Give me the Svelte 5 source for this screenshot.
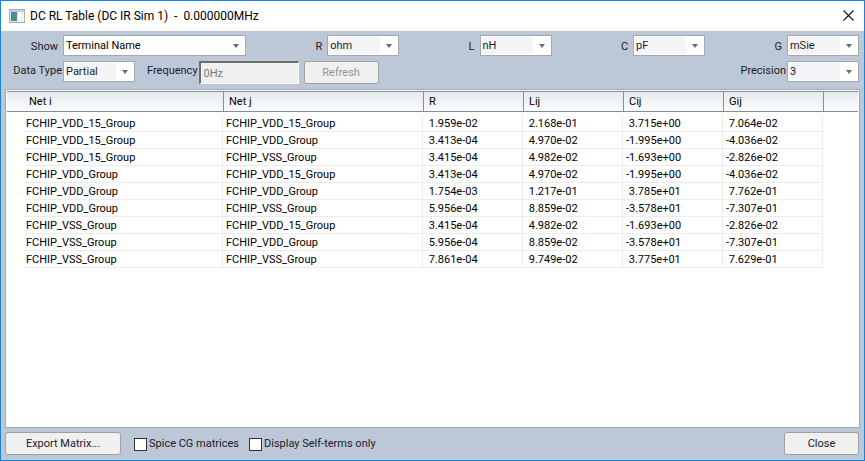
<script>
  let show = 'Terminal Name';
  let dataType = 'Partial';
  let frequency = '0Hz';
  let precision = '3';
  let spiceCG = false;
  let selfTerms = false;

  let units = [
    { name: 'R', value: 'ohm', options: ['ohm', 'mohm'] },
    { name: 'L', value: 'nH', options: ['nH', 'uH'] },
    { name: 'C', value: 'pF', options: ['pF', 'nF'] },
    { name: 'G', value: 'mSie', options: ['mSie', 'Sie'] }
  ];

  const VDD15 = 'FCHIP_VDD_15_Group';
  const VDD = 'FCHIP_VDD_Group';
  const VSS = 'FCHIP_VSS_Group';

  const rows = [
    [VDD15, VDD15, '1.959e-02', '2.168e-01', '3.715e+00', '7.064e-02'],
    [VDD15, VDD, '3.413e-04', '4.970e-02', '-1.995e+00', '-4.036e-02'],
    [VDD15, VSS, '3.415e-04', '4.982e-02', '-1.693e+00', '-2.826e-02'],
    [VDD, VDD15, '3.413e-04', '4.970e-02', '-1.995e+00', '-4.036e-02'],
    [VDD, VDD, '1.754e-03', '1.217e-01', '3.785e+01', '7.762e-01'],
    [VDD, VSS, '5.956e-04', '8.859e-02', '-3.578e+01', '-7.307e-01'],
    [VSS, VDD15, '3.415e-04', '4.982e-02', '-1.693e+00', '-2.826e-02'],
    [VSS, VDD, '5.956e-04', '8.859e-02', '-3.578e+01', '-7.307e-01'],
    [VSS, VSS, '7.861e-04', '9.749e-02', '3.775e+01', '7.629e-01']
  ];

  // positive numbers keep a blank where the minus sign would be
  function pad(value) {
    return value.startsWith('-') ? value : '\u00a0' + value;
  }
</script>

<div class="window">
  <header class="titlebar">
    <svg class="app-icon" width="16" height="14" viewBox="0 0 16 14" aria-hidden="true">
      <defs>
        <linearGradient id="pane" x1="0" y1="0" x2="1" y2="1">
          <stop offset="0" stop-color="#4a7fb0" />
          <stop offset="1" stop-color="#3f9a6c" />
        </linearGradient>
      </defs>
      <rect x="0.5" y="0.5" width="15" height="13" fill="#e4e6e8" stroke="#a9adb2" />
      <rect x="1" y="1" width="14" height="2" fill="#c9ced4" />
      <rect x="2" y="3" width="6" height="9" fill="url(#pane)" />
      <rect x="9" y="3" width="3" height="9" fill="#fff" />
      <rect x="13" y="4" width="2" height="8" fill="#f7f7f7" />
    </svg>
    <h1>DC RL Table (DC IR Sim 1) &nbsp;- &nbsp;0.000000MHz</h1>
    <button class="close-x" aria-label="Close window">
      <svg width="11" height="11" viewBox="0 0 11 11">
        <path d="M0.5 0.5L10.5 10.5M10.5 0.5L0.5 10.5" fill="none" stroke="#111" stroke-width="1.1" />
      </svg>
    </button>
  </header>

  <div class="toolbar">
    <div class="line spread">
      <div class="field">
        <label class="lead" for="show">Show</label>
        <span class="combo wide">
          <select id="show" bind:value={show}>
            <option>Terminal Name</option>
            <option>Net Name</option>
          </select>
          <svg class="arrow" width="6" height="4" viewBox="0 0 6 4"><path d="M0 0H6L3 4Z" /></svg>
        </span>
      </div>
      {#each units as unit}
        <div class="field">
          <label for="unit-{unit.name}">{unit.name}</label>
          <span class="combo">
            <select id="unit-{unit.name}" bind:value={unit.value}>
              {#each unit.options as option}
                <option>{option}</option>
              {/each}
            </select>
            <svg class="arrow" width="6" height="4" viewBox="0 0 6 4"><path d="M0 0H6L3 4Z" /></svg>
          </span>
        </div>
      {/each}
    </div>

    <div class="line second">
      <div class="field">
        <label class="lead" for="data-type">Data Type</label>
        <span class="combo">
          <select id="data-type" bind:value={dataType}>
            <option>Partial</option>
            <option>Loop</option>
          </select>
          <svg class="arrow" width="6" height="4" viewBox="0 0 6 4"><path d="M0 0H6L3 4Z" /></svg>
        </span>
      </div>
      <div class="field frequency">
        <label for="frequency">Frequency</label>
        <input id="frequency" type="text" bind:value={frequency} disabled />
      </div>
      <button class="btn refresh" disabled>Refresh</button>
      <div class="field precision">
        <label for="precision">Precision</label>
        <span class="combo">
          <select id="precision" bind:value={precision}>
            <option>3</option>
            <option>6</option>
          </select>
          <svg class="arrow" width="6" height="4" viewBox="0 0 6 4"><path d="M0 0H6L3 4Z" /></svg>
        </span>
      </div>
    </div>
  </div>

  <main class="list">
    <table>
      <colgroup>
        <col class="indent" />
        <col class="net-i" />
        <col class="net-j" />
        <col class="num" />
        <col class="num" />
        <col class="num" />
        <col class="num" />
        <col />
      </colgroup>
      <thead>
        <tr>
          <th colspan="2">Net i</th>
          <th>Net j</th>
          <th>R</th>
          <th>Lij</th>
          <th>Cij</th>
          <th>Gij</th>
          <th></th>
        </tr>
      </thead>
      <tbody>
        {#each rows as row}
          <tr>
            <td class="blank"></td>
            {#each row as cell, i}
              <td>{i < 2 ? cell : pad(cell)}</td>
            {/each}
            <td class="blank"></td>
          </tr>
        {/each}
      </tbody>
    </table>
  </main>

  <footer>
    <button class="btn export">Export Matrix...</button>
    <label class="check"><input type="checkbox" bind:checked={spiceCG} />Spice CG matrices</label>
    <label class="check"><input type="checkbox" bind:checked={selfTerms} />Display Self-terms only</label>
    <button class="btn close">Close</button>
  </footer>
</div>

<style>
  :global(body) {
    margin: 0;
  }

  .window {
    display: flex;
    flex-direction: column;
    box-sizing: border-box;
    min-height: 100vh;
    border: 1px solid #1883d7;
    background: #bcc7d8;
    color: #1b1b28;
    font-family: Roboto, 'Liberation Sans', sans-serif;
    font-size: 11px;
    line-height: 16px;
  }

  .titlebar {
    display: flex;
    align-items: center;
    height: 30px;
    padding: 0 10px 0 8px;
    background: #fff;
  }

  h1 {
    flex: 1;
    margin: 0 0 0 5px;
    color: #000;
    font-size: 12px;
    font-weight: normal;
    white-space: nowrap;
  }

  .close-x {
    display: flex;
    padding: 0 0 2px;
    border: none;
    background: none;
  }

  .toolbar {
    padding: 4px 5px 5px 0;
  }

  .line {
    display: flex;
    align-items: flex-start;
  }

  .spread {
    justify-content: space-between;
  }

  .field {
    display: flex;
    align-items: flex-start;
  }

  .field label {
    padding: 4px 5px 0 0;
    white-space: nowrap;
  }

  .field .lead {
    box-sizing: border-box;
    width: 62px;
    text-align: right;
  }

  .second {
    margin-top: 5px;
  }

  .second .field label {
    padding: 2px 1px 0 0;
  }

  .combo {
    position: relative;
    display: block;
    width: 72px;
  }

  .combo.wide {
    width: 183px;
  }

  select {
    appearance: none;
    display: block;
    box-sizing: border-box;
    width: 100%;
    height: 21px;
    padding: 1px 18px 0 2px;
    border: 1px solid #a6a8b0;
    border-radius: 0;
    background: linear-gradient(#f5f5f9, #f5f5f9) 1px 1px / 51px 17px no-repeat #fff;
    color: #1b1b28;
    font: inherit;
  }

  .wide select {
    background: #fff;
    color: #000;
  }

  .arrow {
    position: absolute;
    top: 9px;
    right: 7px;
    fill: #6a6a70;
    pointer-events: none;
  }

  .frequency {
    margin-left: 12px;
  }

  input[type='text'] {
    box-sizing: border-box;
    width: 100px;
    height: 23px;
    padding: 0 3px;
    border: 1px solid #fff;
    border-top: 2px solid #6d6d6d;
    border-left: 2px solid #6d6d6d;
    background: #f0f0f0;
    color: #7a7a7a;
    font: inherit;
  }

  .btn {
    box-sizing: border-box;
    height: 23px;
    padding: 1px 0 0;
    border: 1px solid #a0a0a0;
    border-radius: 3px;
    background: #f0f0f0;
    color: #1b1b28;
    font: inherit;
  }

  .btn:disabled {
    color: #929292;
  }

  .refresh {
    width: 75px;
    margin-left: 5px;
  }

  .precision {
    margin-left: auto;
  }

  .list {
    flex: 1;
    margin: 0 4px;
    padding: 1px;
    border: 1px solid #a6a8b0;
    background: #fff;
  }

  table {
    width: 100%;
    table-layout: fixed;
    border-collapse: separate;
    border-spacing: 0;
    color: #000;
  }

  .indent {
    width: 18px;
  }

  .net-i {
    width: 198px;
  }

  .net-j {
    width: 200px;
  }

  .num {
    width: 100px;
  }

  th {
    box-sizing: border-box;
    height: 21px;
    padding: 1px 0 0 5px;
    border: 1px solid #7f8fa3;
    border-right: none;
    background: linear-gradient(#e6eaed, #fdfdfe);
    font-weight: normal;
    text-align: left;
  }

  th:first-child {
    padding-left: 22px;
    border-left: none;
  }

  /* strip between the header and the first row */
  tbody::before {
    content: '';
    display: block;
    height: 3px;
  }

  td {
    box-sizing: border-box;
    height: 17px;
    padding: 1px 0 0 3px;
    border-right: 1px solid #ececec;
    border-bottom: 1px solid #ececec;
    line-height: 15px;
    white-space: nowrap;
  }

  td.blank {
    border: none;
  }

  td.blank + td {
    padding-left: 1px;
  }

  footer {
    display: flex;
    align-items: center;
    padding: 4px 5px 5px 4px;
  }

  .export {
    width: 116px;
    margin-right: 13px;
  }

  .check {
    display: flex;
    align-items: center;
    margin-right: 10px;
    padding-top: 1px;
    white-space: nowrap;
  }

  .check input {
    appearance: none;
    box-sizing: border-box;
    width: 13px;
    height: 13px;
    margin: 0 2px 0 0;
    border: 1px solid #333;
    background: #fff;
  }

  .check input:checked {
    box-shadow: inset 0 0 0 2px #fff;
    background: #333;
  }

  .close {
    width: 75px;
    margin-left: auto;
  }
</style>
